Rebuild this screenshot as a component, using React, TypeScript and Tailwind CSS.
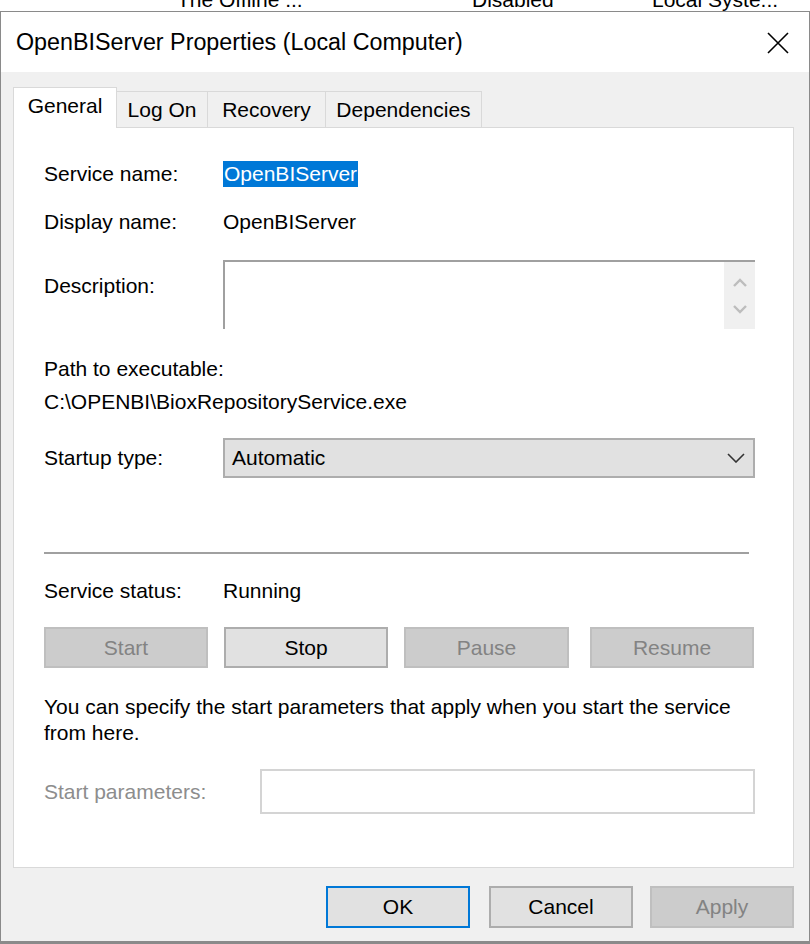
import React from "react";

const font = { fontFamily: '"Liberation Sans", Arial, sans-serif' };

function Btn({
  label,
  disabled,
  primary,
  className = "",
}: {
  label: string;
  disabled?: boolean;
  primary?: boolean;
  className?: string;
}) {
  const tone = disabled
    ? "border-[#bfbfbf] bg-[#cccccc] text-[#838383]"
    : primary
      ? "border-[#0078d7] bg-[#e1e1e1] text-black"
      : "border-[#adadad] bg-[#e1e1e1] text-black";
  return (
    <div className={`flex items-center justify-center border-2 text-[21px] ${tone} ${className}`}>
      {label}
    </div>
  );
}

function Tab({ label, active, width }: { label: string; active?: boolean; width: string }) {
  return (
    <div
      className={`flex shrink-0 items-center justify-center whitespace-nowrap border border-b-0 border-[#d9d9d9] text-[21px] ${width} ${
        active ? "relative z-10 -mb-px h-[41px] bg-white pb-[4px]" : "-ml-px h-[36px] bg-[#f0f0f0]"
      }`}
    >
      {label}
    </div>
  );
}

export default function App() {
  return (
    <div className="flex h-[944px] w-[810px] flex-col overflow-hidden bg-white text-black" style={font}>
      {/* list behind the dialog, mostly hidden */}
      <div className="h-[11px] overflow-hidden">
        <div className="-mt-[12px] flex whitespace-nowrap text-[21px] leading-[24px]">
          <span className="ml-[177px] w-[295px]">The Offline ...</span>
          <span className="w-[180px]">Disabled</span>
          <span>Local Syste...</span>
        </div>
      </div>

      <div className="flex flex-1 flex-col border border-b-0 border-[#8a8a8a]">
        {/* title bar */}
        <div className="flex h-[60px] items-center justify-between bg-white pl-[15px] pr-[20px]">
          <span className="text-[23.3px]">OpenBIServer Properties (Local Computer)</span>
          <svg width="22" height="22" viewBox="0 0 22 22" className="mt-[2px]">
            <path d="M1 1 L21 21 M21 1 L1 21" stroke="#000" strokeWidth="1.6" />
          </svg>
        </div>

        <div className="flex flex-1 flex-col bg-[#f0f0f0] pl-[12px] pr-[15px]">
          <div className="mt-[15px] flex items-end">
            <Tab label="General" active width="w-[104px]" />
            <Tab label="Log On" width="w-[92px]" />
            <Tab label="Recovery" width="w-[119px]" />
            <Tab label="Dependencies" width="w-[157px]" />
          </div>

          <div className="flex h-[741px] flex-col border border-[#d9d9d9] bg-white pl-[30px] pr-[38px] text-[21px]">
            <div className="mt-[33px] flex h-[26px] items-center">
              <span className="w-[179px]">Service name:</span>
              <span className="flex h-[26px] items-center bg-[#0078d7] px-[1px] text-white">OpenBIServer</span>
            </div>
            <div className="mt-[22px] flex h-[26px] items-center">
              <span className="w-[179px]">Display name:</span>
              <span>OpenBIServer</span>
            </div>
            <div className="mt-[25px] flex">
              <span className="w-[179px] pt-[10px]">Description:</span>
              <div className="flex h-[69px] flex-1 border-l-2 border-t-2 border-[#a0a0a0] bg-white">
                <div className="flex-1" />
                <div className="flex w-[31px] flex-col items-center justify-center gap-[16px] bg-[#f0f0f0]">
                  <svg width="16" height="10" viewBox="0 0 16 10">
                    <path d="M2 8 L8 2 L14 8" fill="none" stroke="#bdbdbd" strokeWidth="2.4" />
                  </svg>
                  <svg width="16" height="10" viewBox="0 0 16 10">
                    <path d="M2 2 L8 8 L14 2" fill="none" stroke="#bdbdbd" strokeWidth="2.4" />
                  </svg>
                </div>
              </div>
            </div>
            <div className="mt-[23px] leading-[33px]">
              <div>Path to executable:</div>
              <div>C:\OPENBI\BioxRepositoryService.exe</div>
            </div>
            <div className="mt-[20px] flex items-center">
              <span className="w-[179px]">Startup type:</span>
              <div className="flex h-[40px] flex-1 items-center justify-between border-2 border-[#adadad] bg-[#e1e1e1] pl-[7px] pr-[8px]">
                <span>Automatic</span>
                <svg width="18" height="10" viewBox="0 0 18 10">
                  <path d="M1 1 L9 9 L17 1" fill="none" stroke="#333" strokeWidth="1.6" />
                </svg>
              </div>
            </div>
            <div className="mr-[6px] mt-[74px] h-[2px] bg-[#a0a0a0]" />
            <div className="mt-[24px] flex h-[26px] items-center">
              <span className="w-[179px]">Service status:</span>
              <span>Running</span>
            </div>
            <div className="mt-[23px] flex h-[41px]">
              <Btn label="Start" disabled className="w-[164px]" />
              <Btn label="Stop" className="ml-[16px] w-[164px]" />
              <Btn label="Pause" disabled className="ml-[16px] w-[165px]" />
              <Btn label="Resume" disabled className="ml-[21px] w-[164px]" />
            </div>
            <p className="mt-[26px] whitespace-nowrap leading-[26px]">
              You can specify the start parameters that apply when you start the service
              <br />
              from here.
            </p>
            <div className="mt-[23px] flex items-center">
              <span className="w-[216px] text-[#8d8d8d]">Start parameters:</span>
              <div className="h-[45px] flex-1 border-2 border-[#d4d4d4] bg-white" />
            </div>
          </div>

          <div className="mt-[18px] flex h-[42px] justify-end">
            <Btn label="OK" primary className="w-[144px]" />
            <Btn label="Cancel" className="ml-[19px] w-[144px]" />
            <Btn label="Apply" disabled className="ml-[17px] w-[144px]" />
          </div>
          <div className="flex-1" />
        </div>
      </div>
      <div className="h-[3px] bg-[#8a8a8a]" />
    </div>
  );
}
